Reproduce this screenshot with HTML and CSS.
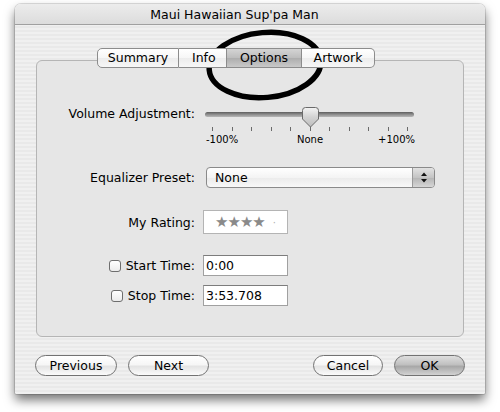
FILE: index.html
```html
<!DOCTYPE html>
<html>
<head>
<meta charset="utf-8">
<link rel="stylesheet" href="styles.css">
</head>
<body>
<div class="window">
  <div class="titlebar">Maui Hawaiian Sup'pa Man</div>
  <div class="content">
    <div class="tabs">
      <span class="tab t-summary">Summary</span>
      <span class="tab t-info">Info</span>
      <span class="tab t-options sel">Options</span>
      <span class="tab t-artwork">Artwork</span>
    </div>
    <div class="panel">
      <div class="row vol">
        <span class="lbl">Volume Adjustment:</span>
        <div class="slider">
          <div class="track"></div>
          <svg class="thumb" width="17" height="21" viewBox="0 0 17 21">
            <defs>
              <linearGradient id="tg" x1="0" y1="0" x2="0" y2="1">
                <stop offset="0" stop-color="#f4f4f4"/>
                <stop offset="0.5" stop-color="#d2d2d2"/>
                <stop offset="1" stop-color="#bdbdbd"/>
              </linearGradient>
            </defs>
            <path d="M3.5 0.5 H13.5 Q16.5 0.5 16.5 3.5 V12 L8.5 20 L0.5 12 V3.5 Q0.5 0.5 3.5 0.5 Z" fill="url(#tg)" stroke="#6a6a6a" stroke-width="1"/>
          </svg>
          <div class="ticks">
            <i></i><i></i><i></i><i></i><i></i><i></i><i></i><i></i><i></i><i></i><i></i>
          </div>
          <div class="scale"><span class="s-l">-100%</span><span class="s-m">None</span><span class="s-r">+100%</span></div>
        </div>
      </div>
      <div class="row eq">
        <span class="lbl">Equalizer Preset:</span>
        <div class="popup">
          <span class="popup-val">None</span>
          <span class="stepper">
            <svg width="8" height="11" viewBox="0 0 8 11"><path d="M4 0.5 L7 4 H1 Z M4 10.5 L7 7 H1 Z" fill="#111"/></svg>
          </span>
        </div>
      </div>
      <div class="row rate">
        <span class="lbl">My Rating:</span>
        <div class="rating"><span class="stars">★★★★</span><span class="dot">·</span></div>
      </div>
      <div class="row start">
        <span class="lbl"><span class="check"></span>Start Time:</span>
        <div class="field">0:00</div>
      </div>
      <div class="row stop">
        <span class="lbl"><span class="check"></span>Stop Time:</span>
        <div class="field">3:53.708</div>
      </div>
    </div>
    <div class="buttons">
      <span class="btn b-prev">Previous</span>
      <span class="btn b-next">Next</span>
      <span class="spacer"></span>
      <span class="btn b-cancel">Cancel</span>
      <span class="btn b-ok">OK</span>
    </div>
  </div>
</div>
<svg class="circle" width="500" height="412" viewBox="0 0 500 412">
  <ellipse cx="265" cy="65" rx="56" ry="32.5" fill="none" stroke="#000" stroke-width="5.5" transform="rotate(-5 265 65)"/>
</svg>
</body>
</html>
```
FILE: styles.css
```css
html, body {
  margin: 0;
  padding: 0;
  background: #ffffff;
  width: 500px;
  height: 412px;
  overflow: hidden;
  font-family: "DejaVu Sans", "Liberation Sans", sans-serif;
  font-size: 12.5px;
  color: #000;
}

body {
  position: relative;
}

.window {
  margin: 4px 0 0 15px;
  width: 470px;
  height: 390px;
  border-radius: 6px 6px 2px 2px;
  background: repeating-linear-gradient(#f0f0f0 0 2px, #e9e9e9 2px 4px);
  box-shadow: 0 0 0 1px rgba(0,0,0,0.12), 0 6px 11px rgba(0,0,0,0.55);
  display: flex;
  flex-direction: column;
}

.titlebar {
  height: 20px;
  line-height: 21px;
  border-bottom: 1px solid #a0a0a0;
  border-radius: 6px 6px 0 0;
  background: linear-gradient(#ececec, #dcdcdc);
  text-align: center;
  padding-right: 31px;
  font-size: 12.5px;
}

.content {
  padding: 23px 21px 0 21px;
  display: flex;
  flex-direction: column;
}

.tabs {
  display: flex;
  margin-left: 61px;
  height: 20px;
  position: relative;
  z-index: 1;
}

.tab {
  box-sizing: border-box;
  height: 20px;
  line-height: 18px;
  text-align: center;
  border: 1px solid #8c8c8c;
  border-left: none;
  background: linear-gradient(#ffffff, #f6f6f6 50%, #ececec 51%, #f7f7f7);
}
.t-summary { width: 82px; border-left: 1px solid #8c8c8c; border-radius: 5px 0 0 5px; }
.t-info { width: 48px; text-align: left; padding-left: 13px; }
.t-options { width: 75px; }
.t-artwork { width: 73px; border-radius: 0 5px 5px 0; }
.tab.sel {
  background: linear-gradient(#d4d4d4, #bdbdbd 50%, #adadad 51%, #c9c9c9);
}

.panel {
  box-sizing: border-box;
  margin-top: -8px;
  height: 277px;
  border: 1px solid #b5b5b5;
  border-radius: 6px;
  background: #e6e6e6;
  padding-top: 43px;
  display: flex;
  flex-direction: column;
}

.row {
  display: flex;
  align-items: center;
}

.lbl {
  width: 158px;
  margin-right: 8px;
  text-align: right;
  display: flex;
  justify-content: flex-end;
  align-items: center;
}

.vol { align-items: flex-start; }
.vol .lbl { line-height: 20px; }

.slider {
  position: relative;
  margin-left: 2px;
  width: 210px;
  height: 43px;
}

.track {
  position: absolute;
  left: 0;
  top: 8px;
  width: 209px;
  height: 5px;
  border-radius: 3px;
  background: linear-gradient(#5e5e5e, #8e8e8e 50%, #b8b8b8);
}

.thumb {
  position: absolute;
  left: 97px;
  top: 3px;
}

.ticks {
  position: absolute;
  left: 7px;
  top: 23px;
  width: 196px;
  height: 4px;
  display: flex;
  justify-content: space-between;
}
.ticks i {
  width: 1px;
  height: 4px;
  background: #6a6a6a;
}

.scale {
  position: absolute;
  left: 0;
  top: 29px;
  width: 210px;
  display: grid;
  grid-template-columns: 1fr auto 1fr;
  font-size: 10px;
  line-height: 13px;
}
.s-l { justify-self: start; padding-left: 1px; }
.s-m { justify-self: center; }
.s-r { justify-self: end; }

.eq { margin-top: 20px; }

.popup {
  box-sizing: border-box;
  margin-left: 3px;
  width: 229px;
  height: 21px;
  border: 1px solid #8a8a8a;
  border-radius: 4px;
  background: linear-gradient(#ffffff, #f4f4f4 50%, #ebebeb 51%, #f8f8f8);
  display: flex;
  align-items: center;
  overflow: hidden;
}
.popup-val {
  flex: 1;
  padding-left: 8px;
  line-height: 19px;
}
.stepper {
  width: 21px;
  height: 19px;
  border-left: 1px solid #9a9a9a;
  background: linear-gradient(#e2e2e2, #c4c4c4 50%, #b4b4b4 51%, #d6d6d6);
  display: flex;
  align-items: center;
  justify-content: center;
}

.rate { margin-top: 22px; }
.rating {
  box-sizing: border-box;
  width: 85px;
  height: 24px;
  border: 1px solid #b4b4b4;
  background: #ffffff;
  display: flex;
  align-items: center;
  padding-left: 11px;
  color: #8a8a8a;
}
.stars { font-size: 15px; letter-spacing: -1px; }
.dot { margin-left: 8px; color: #b0b0b0; font-size: 10px; }

.start { margin-top: 21px; }
.stop { margin-top: 9px; }

.check {
  box-sizing: border-box;
  width: 12px;
  height: 12px;
  border: 1px solid #6e6e6e;
  border-radius: 3px;
  background: linear-gradient(#ffffff, #ececec);
  margin-right: 5px;
}

.field {
  box-sizing: border-box;
  width: 85px;
  height: 21px;
  border: 1px solid #a0a0a0;
  border-top-color: #7c7c7c;
  background: #ffffff;
  padding-left: 2px;
  line-height: 19px;
}

.buttons {
  display: flex;
  margin-top: 18px;
  margin-left: -1px;
  margin-right: -1px;
  height: 21px;
}
.btn {
  box-sizing: border-box;
  height: 21px;
  line-height: 19px;
  text-align: center;
  border: 1px solid #727272;
  border-radius: 11px;
  background: linear-gradient(#ffffff, #f6f6f6 45%, #e4e4e4 55%, #fbfbfb);
}
.b-prev { width: 82px; }
.b-next { width: 81px; margin-left: 11px; }
.spacer { flex: 1; }
.b-cancel { width: 70px; }
.b-ok {
  width: 71px;
  margin-left: 11px;
  background: linear-gradient(#dedede, #c0c0c0 45%, #a8a8a8 55%, #d2d2d2);
}

.circle {
  position: absolute;
  left: 0;
  top: 0;
  pointer-events: none;
}
```
